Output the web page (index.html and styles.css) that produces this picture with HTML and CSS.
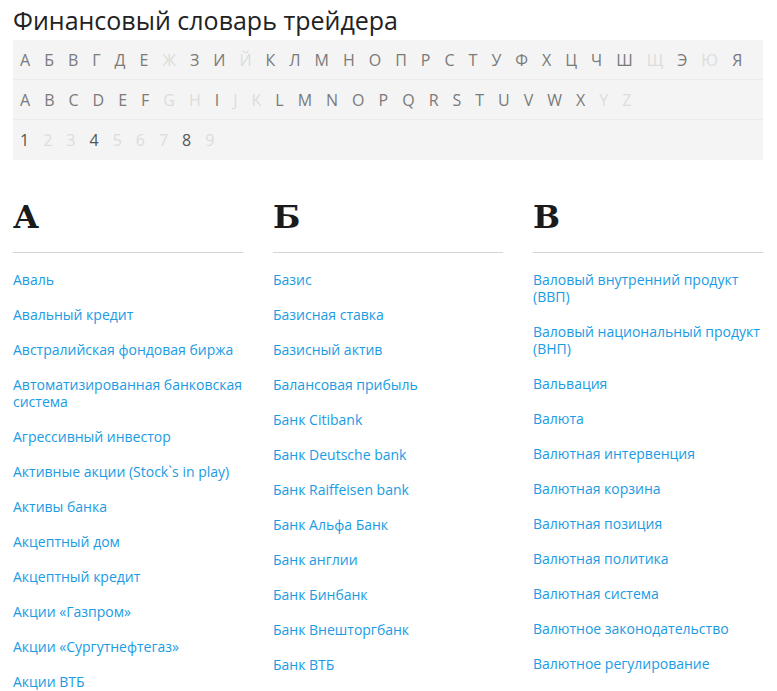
FILE: index.html
```html
<!DOCTYPE html>
<html lang="ru">
<head>
   <meta charset="UTF-8">
   <title>Финансовый словарь трейдера</title>
   <link rel="stylesheet" href="styles.css">
</head>
<body>
   <div class="page">
      <h1 class="title">Финансовый словарь трейдера</h1>
      <div class="abc">
         <div class="abc-row">
            <a>А</a><a>Б</a><a>В</a><a>Г</a><a>Д</a><a>Е</a><span>Ж</span><a>З</a><a>И</a><span>Й</span><a>К</a><a>Л</a><a>М</a><a>Н</a><a>О</a><a>П</a><a>Р</a><a>С</a><a>Т</a><a>У</a><a>Ф</a><a>Х</a><a>Ц</a><a>Ч</a><a>Ш</a><span>Щ</span><a>Э</a><span>Ю</span><a>Я</a>
         </div>
         <div class="abc-row">
            <a>A</a><a>B</a><a>C</a><a>D</a><a>E</a><a>F</a><span>G</span><span>H</span><a>I</a><span>J</span><span>K</span><a>L</a><a>M</a><a>N</a><a>O</a><a>P</a><a>Q</a><a>R</a><a>S</a><a>T</a><a>U</a><a>V</a><a>W</a><a>X</a><span>Y</span><span>Z</span>
         </div>
         <div class="abc-row digits">
            <a>1</a><span>2</span><span>3</span><a>4</a><span>5</span><span>6</span><span>7</span><a>8</a><span>9</span>
         </div>
      </div>

      <div class="columns">
         <div class="col">
            <h2 class="letter">А</h2>
            <ul class="terms">
               <li><a href="#">Аваль</a></li>
               <li><a href="#">Авальный кредит</a></li>
               <li><a href="#">Австралийская фондовая биржа</a></li>
               <li><a href="#">Автоматизированная банковская система</a></li>
               <li><a href="#">Агрессивный инвестор</a></li>
               <li><a href="#">Активные акции (Stock`s in play)</a></li>
               <li><a href="#">Активы банка</a></li>
               <li><a href="#">Акцептный дом</a></li>
               <li><a href="#">Акцептный кредит</a></li>
               <li><a href="#">Акции «Газпром»</a></li>
               <li><a href="#">Акции «Сургутнефтегаз»</a></li>
               <li><a href="#">Акции ВТБ</a></li>
            </ul>
         </div>
         <div class="col">
            <h2 class="letter">Б</h2>
            <ul class="terms">
               <li><a href="#">Базис</a></li>
               <li><a href="#">Базисная ставка</a></li>
               <li><a href="#">Базисный актив</a></li>
               <li><a href="#">Балансовая прибыль</a></li>
               <li><a href="#">Банк Citibank</a></li>
               <li><a href="#">Банк Deutsche bank</a></li>
               <li><a href="#">Банк Raiffeisen bank</a></li>
               <li><a href="#">Банк Альфа Банк</a></li>
               <li><a href="#">Банк англии</a></li>
               <li><a href="#">Банк Бинбанк</a></li>
               <li><a href="#">Банк Внешторгбанк</a></li>
               <li><a href="#">Банк ВТБ</a></li>
            </ul>
         </div>
         <div class="col">
            <h2 class="letter">В</h2>
            <ul class="terms">
               <li><a href="#">Валовый внутренний продукт (ВВП)</a></li>
               <li><a href="#">Валовый национальный продукт (ВНП)</a></li>
               <li><a href="#">Вальвация</a></li>
               <li><a href="#">Валюта</a></li>
               <li><a href="#">Валютная интервенция</a></li>
               <li><a href="#">Валютная корзина</a></li>
               <li><a href="#">Валютная позиция</a></li>
               <li><a href="#">Валютная политика</a></li>
               <li><a href="#">Валютная система</a></li>
               <li><a href="#">Валютное законодательство</a></li>
               <li><a href="#">Валютное регулирование</a></li>
            </ul>
         </div>
      </div>
   </div>
</body>
</html>
```

FILE: styles.css
```css
*{
   margin: 0;
   padding: 0;
   box-sizing: border-box;
}
body{
   background: #fff;
   font-family: "Open Sans", "Noto Sans", sans-serif;
   color: #222;
}
.page{
   padding: 4px 14px 0 13px;
}
.title{
   font-weight: 400;
   font-size: 25px;
   line-height: 32px;
   color: #222;
   margin-bottom: 4px;
}
.abc{
   background: #f4f4f4;
}
.abc-row{
   display: flex;
   align-items: center;
   height: 40px;
   padding: 0 7px;
   border-bottom: 1px solid #ececec;
   font-size: 16px;
}
.abc-row:last-child{
   border-bottom: 0;
}
.abc-row a, .abc-row span{
   margin-right: 14px;
}
.abc-row a{
   color: #7a7a7a;
}
.abc-row span{
   color: #dcdcdc;
}
.abc-row.digits a{
   color: #555;
}
.columns{
   display: grid;
   grid-template-columns: 230px 230px 230px;
   column-gap: 30px;
   margin-top: 37px;
}
.letter{
   font-family: "DejaVu Serif", serif;
   font-weight: 700;
   font-size: 32px;
   line-height: 40px;
   color: #1b1b1b;
   padding-bottom: 15px;
   border-bottom: 1px solid #d6d6d6;
   margin-bottom: 18px;
}
.terms{
   list-style: none;
}
.terms li{
   font-size: 14px;
   line-height: 17px;
   margin-bottom: 18px;
}
.terms a{
   color: #1a9be3;
   text-decoration: none;
}
```
